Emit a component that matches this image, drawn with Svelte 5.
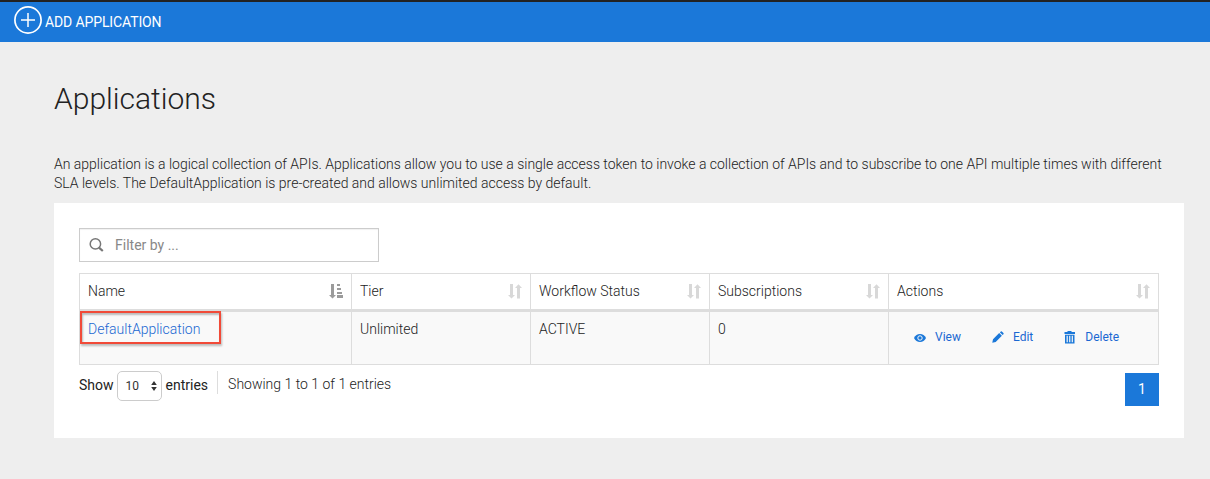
<script>
  const columns = ['Name', 'Tier', 'Workflow Status', 'Subscriptions', 'Actions'];
  const rows = [
    { name: 'DefaultApplication', tier: 'Unlimited', status: 'ACTIVE', subscriptions: 0 }
  ];
</script>

<div class="page">
  <header class="toolbar">
    <a class="add" href="#add">
      <svg width="28" height="28" viewBox="0 0 28 28" fill="none" stroke="#fff">
        <circle cx="14" cy="14" r="13.1" stroke-width="1.7" />
        <path d="M14 7v14M7 14h14" stroke-width="1.5" />
      </svg>
      <span>ADD APPLICATION</span>
    </a>
  </header>

  <main>
    <h1>Applications</h1>
    <p class="intro">
      An application is a logical collection of APIs. Applications allow you to use a single access token to invoke a collection of APIs and to subscribe to one API multiple times with different<br />
      SLA levels. The DefaultApplication is pre-created and allows unlimited access by default.
    </p>

    <section class="card">
      <label class="search">
        <svg width="16" height="16" viewBox="0 0 16 16" fill="none" stroke="#777">
          <circle cx="6.4" cy="6.900" r="5.200" stroke-width="1.500" />
          <path d="M10 10.700l3.800 3.300" stroke-width="2.200" />
        </svg>
        <input type="text" placeholder="Filter by ..." />
      </label>

      <div class="table">
        <div class="row head">
          {#each columns as column, i}
            <div class="cell">
              <span>{column}</span>
              {#if i === 0}
                <svg width="14" height="15" viewBox="0 0 14 15" fill="#9b9b9b">
                  <path d="M2 0h3v11h2L3.500 14.600 0 11h2zM8 0h3v2H8zM8 4h4v2H8zM8 8h5v2H8zM8 11h6v3H8z" />
                </svg>
              {:else}
                <svg width="14" height="15" viewBox="0 0 14 15" fill="#d8d8d8">
                  <path d="M2 0h3v11h2L3.500 14.600 0 11h2zM9 14.600h3V4h2L10.500 .2 7 4h2z" />
                </svg>
              {/if}
            </div>
          {/each}
        </div>
        {#each rows as row}
          <div class="row body">
            <div class="cell"><a class="name" href="#app">{row.name}</a></div>
            <div class="cell">{row.tier}</div>
            <div class="cell">{row.status}</div>
            <div class="cell">{row.subscriptions}</div>
            <div class="cell actions">
              <a href="#view">
                <svg width="12" height="12" viewBox="0 0 12 12">
                  <path fill="#1b78d9" d="M0 6C1.300 3.400 3.400 2 6 2s4.700 1.400 6 4c-1.300 2.600-3.400 4-6 4S1.300 8.600 0 6z" />
                  <circle cx="6" cy="6" r="2.200" fill="#1b78d9" stroke="#f9f9f9" stroke-width="1" />
                </svg>
                <span>View</span>
              </a>
              <a href="#edit">
                <svg width="12" height="12" viewBox="0 0 13 13" fill="#1b78d9">
                  <path d="M.3 12.700l.8-3.700 6.700-6.700 2.900 2.900L4 11.900zM8.600 1.500l.9-.9q.6-.5 1.200 0l1.700 1.700q.5.600 0 1.200l-.9.9z" />
                </svg>
                <span>Edit</span>
              </a>
              <a href="#delete">
                <svg width="12" height="13" viewBox="0 0 12 13" fill="#1b78d9">
                  <path d="M3.500 0h4v1h3.500v2H.500V1h3z" />
                  <path fill-rule="evenodd" d="M1 3.800h9.500v8.700H1zM2.600 4.800v6.500h1.200V4.800zM5.150 4.800v6.500h1.200V4.800zM7.700 4.800v6.500h1.200V4.800z" />
                </svg>
                <span>Delete</span>
              </a>
            </div>
          </div>
        {/each}
      </div>

      <footer>
        <div class="length">
          <span>Show</span>
          <button class="select">
            10
            <svg width="6" height="10" viewBox="0 0 6 10" fill="#333">
              <path d="M3 0l2.800 4H.2zM3 10l2.800-4H.2z" />
            </svg>
          </button>
          <span>entries</span>
        </div>
        <div class="info">Showing 1 to 1 of 1 entries</div>
        <a class="current" href="#1">1</a>
      </footer>
    </section>
  </main>
</div>

<style>
  :global(body) {
    background: #eee;
  }
  .page {
    box-sizing: border-box;
    height: 479px;
    overflow: hidden;
    background: #eee;
    color: #222;
    font: 300 14px/20px Roboto, sans-serif;
  }
  .page * {
    box-sizing: border-box;
  }
  a {
    color: #1b68d2;
    text-decoration: none;
  }
  .toolbar {
    height: 42px;
    padding-left: 14px;
    border-top: 2px solid #222;
    background: #1b78d9;
  }
  .add {
    display: flex;
    gap: 3px;
    padding-top: 4px;
    color: #fff;
    font-weight: 400;
    line-height: 32px;
    letter-spacing: -0.12px;
  }
  main {
    padding: 0 26px 0 54px;
  }
  h1 {
    margin: 0;
    padding-top: 39px;
    font-size: 30px;
    font-weight: 300;
    line-height: 36px;
  }
  .intro {
    margin: 38px 0 10px;
    line-height: 19px;
    letter-spacing: -0.006px;
    white-space: nowrap;
  }
  .card {
    height: 235px;
    padding: 25px;
    background: #fff;
  }
  .search {
    display: flex;
    align-items: center;
    gap: 10px;
    width: 300px;
    height: 34px;
    padding-left: 9px;
    border: 1px solid #ccc;
    box-shadow: inset 0 1px 1px rgba(0, 0, 0, 0.06);
  }
  .search input {
    width: 240px;
    padding: 0;
    border: 0;
    outline: 0;
    background: transparent;
    font: 400 14px/20px Roboto, sans-serif;
  }
  .search input::placeholder {
    color: #888;
  }
  .table {
    margin-top: 11px;
    border: 1px solid #ddd;
    border-right: 0;
  }
  .row {
    display: grid;
    grid-template-columns: 272px 179px 179px 179px 270px;
  }
  .cell {
    padding: 7px 8px;
    border-right: 1px solid #ddd;
  }
  .head {
    height: 38px;
    border-bottom: 3px solid #ddd;
  }
  .head .cell {
    display: flex;
    justify-content: space-between;
  }
  .head svg {
    margin-top: 3px;
  }
  .body {
    height: 52px;
    background: #f9f9f9;
  }
  .name {
    display: block;
    width: 141px;
    height: 33px;
    margin: -8px 0 0 -8px;
    padding: 6px;
    border: 2px solid #f14a38;
    box-shadow: 1px 2px 2px rgba(0, 0, 0, 0.25), inset 1px 2px 2px rgba(0, 0, 0, 0.25);
  }
  .actions {
    display: flex;
    gap: 31px;
    padding: 15px 0 0 25px;
    font-size: 12px;
    font-weight: 400;
  }
  .actions a {
    display: flex;
    gap: 9px;
  }
  .actions svg {
    margin-top: 4px;
  }
  .actions a:first-child svg {
    margin-top: 5px;
  }
  footer {
    display: flex;
    align-items: flex-start;
    padding-top: 6px;
  }
  .length {
    display: flex;
    gap: 4px;
    margin-right: -1px;
    font-weight: 400;
    line-height: 28px;
  }
  .length span:first-child {
    margin-right: -1px;
  }
  .select {
    display: flex;
    align-items: center;
    justify-content: space-between;
    width: 45px;
    height: 30px;
    padding: 0 4px 0 8px;
    border: 1px solid #ccc;
    border-radius: 5px;
    background: #fff;
    color: #333;
    font: 400 12px/20px Roboto, sans-serif;
  }
  .info {
    height: 23px;
    margin-left: 10px;
    padding: 3px 0 0 10px;
    border-left: 1px solid #ddd;
  }
  .current {
    width: 34px;
    height: 33px;
    margin: 2px 0 0 auto;
    background: #1b78d9;
    color: #fff;
    font-weight: 400;
    line-height: 32px;
    text-align: center;
  }
</style>
